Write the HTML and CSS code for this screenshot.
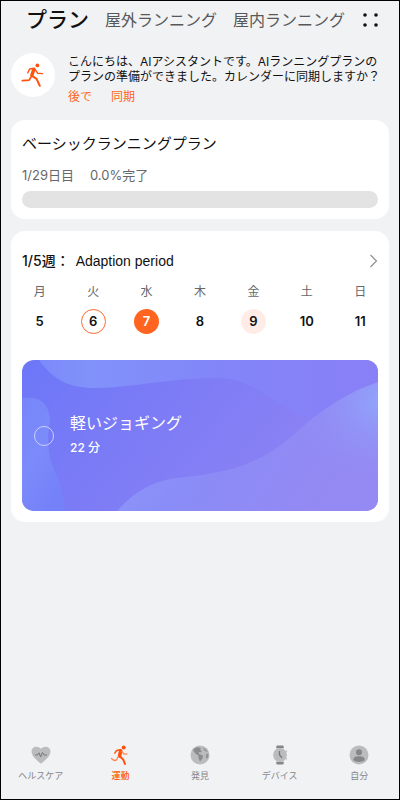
FILE: index.html
```html
<!DOCTYPE html>
<html lang="ja">
<head>
<meta charset="utf-8">
<meta name="viewport" content="width=device-width, initial-scale=1">
<title>プラン</title>
<link rel="stylesheet" href="styles.css">
</head>
<body>
<div class="app">
  <header class="tabs">
    <h1 class="tab-current">プラン</h1>
    <a class="tab" href="#outdoor">屋外ランニング</a>
    <a class="tab" href="#indoor">屋内ランニング</a>
    <button class="more" type="button" aria-label="メニュー">
      <svg width="16" height="14" viewBox="0 0 16 14" fill="#111"><circle cx="2" cy="2" r="1.8"/><circle cx="13" cy="2" r="1.8"/><circle cx="2" cy="12" r="1.8"/><circle cx="13" cy="12" r="1.8"/></svg>
    </button>
  </header>

  <main class="content">
    <section class="assistant">
      <div class="avatar">
        <svg width="24" height="24" viewBox="0 0 24 24" fill="none" stroke="#ff520e" stroke-linecap="round" stroke-linejoin="round">
          <circle cx="16.4" cy="2.4" r="1.9" fill="#ff520e" stroke="none"/>
          <path d="M12.8 6.2L10.8 12.6" stroke-width="3.4"/>
          <path d="M12 5.4L8.6 6L6.8 9.8" stroke-width="1.5"/>
          <path d="M14.2 6.6L16.6 10.2L21.4 10.6" stroke-width="1.4"/>
          <path d="M11.4 13.2L15.6 15.8L18.8 22.8" stroke-width="2"/>
          <path d="M9.8 14.4L8.2 17.1L1.4 17.6" stroke-width="1.8"/>
        </svg>
      </div>
      <div class="message">
        <p class="message-text">こんにちは、AIアシスタントです。AIランニングプランのプランの準備ができました。カレンダーに同期しますか？</p>
        <div class="actions">
          <button class="action" type="button">後で</button>
          <button class="action" type="button">同期</button>
        </div>
      </div>
    </section>

    <section class="card">
      <h2 class="plan-title">ベーシックランニングプラン</h2>
      <p class="plan-meta"><span>1/29日目</span><span>0.0%完了</span></p>
      <div class="progress" role="progressbar" aria-label="進捗" aria-valuenow="0" aria-valuemin="0" aria-valuemax="100"></div>
    </section>

    <section class="card week">
      <a class="week-head" href="#weeks">
        <span class="week-no">1/5週：</span>
        <span class="week-name">Adaption period</span>
        <svg class="chevron" width="9" height="14" viewBox="0 0 9 14" fill="none" stroke="#8c8c8e" stroke-width="1.1"><path d="M1.5 1L7.5 7L1.5 13"/></svg>
      </a>
      <table class="days">
        <thead><tr><th>月</th><th>火</th><th>水</th><th>木</th><th>金</th><th>土</th><th>日</th></tr></thead>
        <tbody><tr>
          <td><button class="day" type="button">5</button></td>
          <td><button class="day today" type="button">6</button></td>
          <td><button class="day selected" type="button">7</button></td>
          <td><button class="day" type="button">8</button></td>
          <td><button class="day planned" type="button">9</button></td>
          <td><button class="day" type="button">10</button></td>
          <td><button class="day" type="button">11</button></td>
        </tr></tbody>
      </table>
      <article class="workout">
        <svg class="waves" viewBox="0 0 356 151" preserveAspectRatio="none" aria-hidden="true">
          <defs>
            <linearGradient id="base" x1="0" y1="0" x2="1" y2=".35"><stop offset="0" stop-color="#6c77f8"/><stop offset=".4" stop-color="#7b7bf6"/><stop offset="1" stop-color="#8e83f3"/></linearGradient>
            <linearGradient id="top" x1="0" y1="0" x2="1" y2="0"><stop offset="0" stop-color="#7b8afa"/><stop offset=".15" stop-color="#8192fa"/><stop offset=".5" stop-color="#8286f8"/><stop offset=".8" stop-color="#8681f7"/><stop offset="1" stop-color="#8980f6"/></linearGradient>
            <linearGradient id="left" x1="0" y1="0" x2=".6" y2="1"><stop offset="0" stop-color="#7685f9"/><stop offset=".5" stop-color="#7c8bfa"/><stop offset="1" stop-color="#7481f9"/></linearGradient>
            <linearGradient id="low" x1="0" y1="0" x2="1" y2=".3"><stop offset="0" stop-color="#8b9cf9"/><stop offset=".45" stop-color="#8a8cf7"/><stop offset="1" stop-color="#9589f3"/></linearGradient>
            <radialGradient id="glow" cx="356" cy="42" r="90" gradientUnits="userSpaceOnUse"><stop offset="0" stop-color="#91a3fa"/><stop offset="1" stop-color="#9189f5" stop-opacity="0"/></radialGradient>
          </defs>
          <rect width="356" height="151" fill="url(#base)"/>
          <path d="M17 0C31 19 46 28 72 28C108 28 152 17 201 18C230 21 247 39 275 53C302 67 330 43 356 28V0Z" fill="url(#top)"/>
          <path d="M0 38C17 36 28 42 28 62C24 82 27 101 34 113Q42 132 43 151H0Z" fill="url(#left)"/>
          <path d="M95 151C109 136 125 122 154 118C186 114 211 112 240 97C261 86 273 73 292 57C314 41 333 30 356 22V151Z" fill="url(#low)"/>
          <path d="M95 151C109 136 125 122 154 118C186 114 211 112 240 97C261 86 273 73 292 57C314 41 333 30 356 22V151Z" fill="url(#glow)"/>
        </svg>
        <input class="done" type="checkbox" id="jog">
        <label class="workout-text" for="jog">
          <span class="workout-title">軽いジョギング</span>
          <span class="workout-time">22 分</span>
        </label>
      </article>
    </section>
  </main>

  <nav class="nav">
    <a class="nav-item" href="#health">
      <svg width="20" height="20" viewBox="0 0 20 20"><path d="M10 18.8C7 16.5.5 11.5.5 6.6C.5 1.2 7 .1 10 3.8C13 .1 19.5 1.2 19.5 6.6C19.5 11.5 13 16.5 10 18.8Z" fill="#bbbcbd"/><path d="M4 10H6.5L8 7.8L9.6 12L11.5 7.5L13 10H16" fill="none" stroke="#77787a"/></svg>
      ヘルスケア
    </a>
    <a class="nav-item active" href="#exercise" aria-current="page">
      <svg width="20" height="20" viewBox="0 0 20 20" fill="none" stroke="#ff520e" stroke-linecap="round" stroke-linejoin="round">
        <circle cx="13.7" cy="2.4" r="2" fill="#ff520e" stroke="none"/>
        <path d="M10.7 5.8L9.6 11" stroke-width="3.6"/>
        <path d="M10 4.8L6.6 5.5L4.8 8.2" stroke-width="1.4"/>
        <path d="M12 6.5L13.8 9L17 9" stroke="#ff9669" stroke-width="1.3"/>
        <path d="M10 11.5L13.2 14.4L15 19" stroke-width="2"/>
        <path d="M8 12L6.5 15L4 15.5L1.5 13.5" stroke="#ff8650" stroke-width="1.3"/>
      </svg>
      運動
    </a>
    <a class="nav-item" href="#discover">
      <svg width="20" height="20" viewBox="0 0 20 20"><circle cx="10" cy="10" r="9.5" fill="#bbbcbd"/><path d="M3 4.8Q6 2 9 2.4L11 3.2L10 5L12 6L10.3 7.5L8.5 7L9 9L13 10.5L12.5 13.5L10 16.5L8.4 13L8.5 10.5L5.5 8.8Z" fill="#8b8c8e"/><path d="M13 2.5Q16.5 4 17.8 7L16 6.5L14 5ZM16.3 9L18.3 8.5V12L16.5 14L15.7 11.5Z" fill="#929395"/></svg>
      発見
    </a>
    <a class="nav-item" href="#devices">
      <svg width="20" height="20" viewBox="0 0 20 20"><path d="M6 3.2L6.7.5H13.3L14 3.2ZM6 16.8L6.7 19.5H13.3L14 16.8Z" fill="#858688"/><circle cx="10" cy="10" r="6.9" fill="#bbbcbd"/><path d="M16 5.8L17 6.5M16 14.2L17 13.5" stroke="#bbbcbd" stroke-width="1.4"/><path d="M9.5 6V10L12 12.8" fill="none" stroke="#77787a" stroke-width="1.3"/></svg>
      デバイス
    </a>
    <a class="nav-item" href="#me">
      <svg width="20" height="20" viewBox="0 0 20 20"><circle cx="10" cy="10" r="9.5" fill="#bbbcbd"/><circle cx="10" cy="7.2" r="3" fill="#858688"/><path d="M4.3 15.3C4.3 12 6.6 11.3 10 11.3S15.7 12 15.7 15.3Q13.5 17 10 17T4.3 15.3Z" fill="#858688"/></svg>
      自分
    </a>
  </nav>
</div>
</body>
</html>
```
FILE: styles.css
```css
* { box-sizing: border-box; }

body {
  margin: 0;
  background: #f1f2f4;
  color: #111;
  font-family: Inter, "Noto Sans CJK JP", sans-serif;
}

h1, h2, p { margin: 0; font-weight: 400; }
a { color: inherit; text-decoration: none; }
svg { display: block; }

button {
  padding: 0;
  border: 0;
  background: none;
  color: inherit;
  font: inherit;
}

.app {
  display: flex;
  flex-direction: column;
  min-height: 100vh;
  border: 1px solid #000;
}

.tabs {
  display: flex;
  align-items: center;
  gap: 16px;
  height: 38px;
  padding: 0 20px 0 25px;
  white-space: nowrap;
}

.tab-current { font-size: 21px; font-weight: 500; line-height: 36px; }
.tab { color: #57585a; font-size: 16px; line-height: 36px; }
.tab + .tab { margin-right: auto; }

.content {
  display: flex;
  flex-direction: column;
  gap: 12px;
  padding: 14px 10px;
}

.assistant { display: flex; gap: 13px; }

.avatar {
  display: grid;
  place-items: center;
  flex: none;
  width: 44px;
  height: 44px;
  border-radius: 50%;
  background: #fff;
}

.message-text {
  font-size: 12px;
  line-height: 15px;
  margin-top: 1px;
}

.actions { display: flex; gap: 19px; margin: 5px 0 3px; }

.action {
  color: #ff6420;
  font-size: 12px;
  line-height: 16px;
}

.card {
  padding: 11px;
  border-radius: 14px;
  background: #fff;
}

.plan-title { font-size: 15px; line-height: 26px; }

.plan-meta {
  display: flex;
  gap: 16px;
  margin-top: 9px;
  color: #666769;
  font-size: 13px;
  line-height: 18px;
}

.progress {
  height: 17px;
  margin-top: 7px;
  border-radius: 9px;
  background: #e3e3e3;
}

.week-head {
  display: flex;
  align-items: center;
  margin-top: 8px;
  font-size: 14px;
  line-height: 22px;
}

.week-no { font-weight: 500; }
.week-name { margin-left: 6px; font-family: "Liberation Sans", sans-serif; }
.chevron { margin-left: auto; }

.days {
  width: calc(100% + 18px);
  margin: 11px -9px 0;
  border-collapse: collapse;
  table-layout: fixed;
}

.days th, .days td { padding: 0; text-align: center; }

.days th {
  color: #666769;
  font-size: 12px;
  font-weight: 400;
  line-height: 18px;
}

.days td { padding-top: 8px; }

.day {
  display: block;
  width: 25px;
  height: 25px;
  margin: 0 auto;
  border-radius: 50%;
  font-size: 13px;
  font-weight: 600;
  line-height: 23px;
}

.today { border: 1px solid #ff6a30; }
.selected { background: #ff6420; color: #fff; }
.planned { background: #ffece6; }

.workout {
  position: relative;
  display: flex;
  align-items: center;
  gap: 16px;
  height: 151px;
  margin-top: 26px;
  padding: 0 12px;
  overflow: hidden;
  border-radius: 12px;
  color: #fff;
}

.waves {
  position: absolute;
  inset: 0;
  width: 100%;
  height: 100%;
}

.done {
  position: relative;
  flex: none;
  width: 20px;
  height: 20px;
  margin: 0;
  appearance: none;
  border: 1px solid #cbd0ff;
  border-radius: 50%;
}

.workout-text { position: relative; display: grid; gap: 3px; padding-bottom: 4px; }
.workout-title { font-size: 16px; line-height: 26px; }
.workout-time { font-size: 12px; font-weight: 500; line-height: 18px; }

.nav {
  display: grid;
  grid-template-columns: repeat(5, 1fr);
  margin-top: auto;
  padding-bottom: 16px;
}

.nav-item {
  display: flex;
  flex-direction: column;
  align-items: center;
  gap: 4px;
  color: #858688;
  font-size: 9px;
  line-height: 14px;
}

.active { color: #ff520e; font-weight: 500; }
```
